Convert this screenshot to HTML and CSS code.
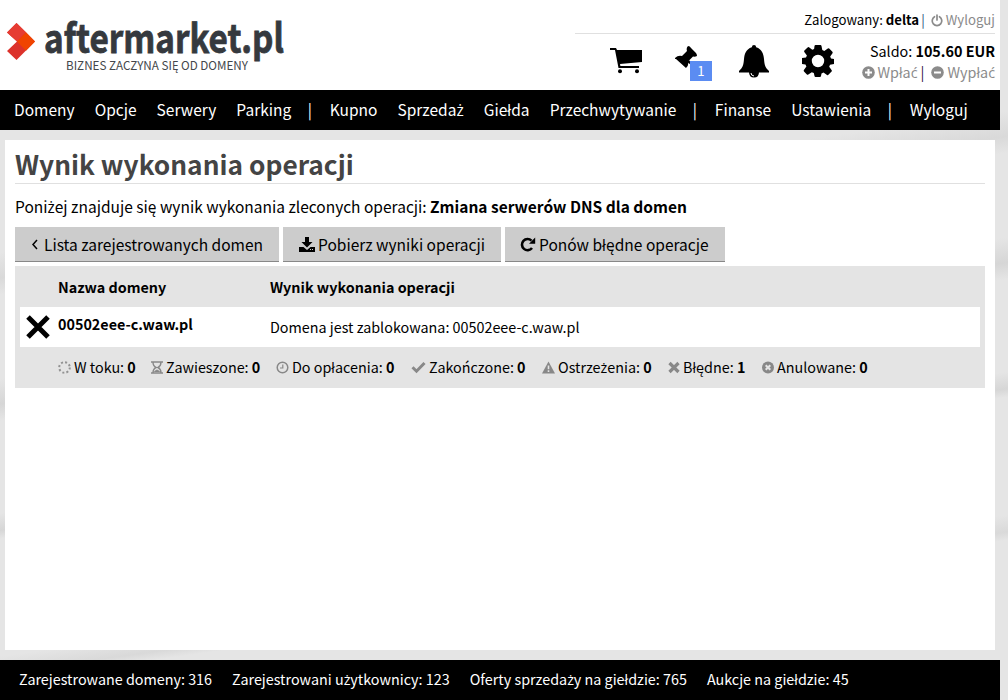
FILE: index.html
```html
<!DOCTYPE html>
<html lang="pl">
<head>
<meta charset="utf-8">
<title>Wynik wykonania operacji</title>
<link rel="stylesheet" href="styles.css">
</head>
<body>
<div class="page">
  <header class="header">
    <svg class="logo" width="300" height="90" viewBox="0 0 300 90">
      <path fill="#dc322b" d="M16.500 23L35 41.500 16.500 60 7 51l10-9.500L7 32.500z"/>
      <path fill="#e63c33" d="M16.500 23L26 32.300 17 41.500 7 32.500z"/>
      <path fill="#f04400" d="M26 32.300l9 9.200-9 9.300-9-9.300z"/>
      <text class="logo-name" x="44" y="53" textLength="240" lengthAdjust="spacingAndGlyphs">aftermarket.pl</text>
      <text class="logo-tag" x="66" y="70" textLength="182" lengthAdjust="spacingAndGlyphs">BIZNES ZACZYNA SIĘ OD DOMENY</text>
    </svg>
    <div class="account">
      <div class="user">
        <span>Zalogowany: <b>delta</b></span><span class="bar">|</span>
        <a class="muted"><svg width="12" height="13" viewBox="0 0 12 13" fill="none" stroke="#8b8b8b" stroke-width="1.700" stroke-linecap="round"><path d="M3.500 2.700a4.800 4.800 0 1 0 5 0M6 1v5"/></svg><span>Wyloguj</span></a>
      </div>
      <div class="tools">
        <div class="icons">
          <svg class="cart" width="32" height="28" viewBox="0 0 32 28"><path d="M0 1h6l1 2h25v12L10 17l.4 2H29v2H8.500L5 3H0z"/><circle cx="10" cy="24.200" r="2"/><circle cx="27" cy="24.200" r="2"/></svg>
          <span class="pin"><svg width="22" height="24" viewBox="0 0 22 24"><path d="M13 0q2 0 3 2l5 5q1 1.500 1 3-2 1-4 .5l-5 5q1 4-2 6.500L6 17.500 1 13Q-.5 13 0 12q3-3 7-2l5-5q-1-3 1-5z"/><path d="M14 14l5 7-7-5z"/></svg><span class="badge">1</span></span>
          <svg class="bell" width="32" height="33" viewBox="0 0 32 33"><path d="M16 0q2 0 2.200 2.200C24 4 25.500 9 26 14c.4 6 1.500 9 5 12v1.500H1V26c3.500-3 4.600-6 5-12 .5-5 2-10 7.800-11.800Q14 0 16 0zM11 27h10q0 5.500-5 5.500T11 27z"/><path d="M13 28q0 2.700 3 3" fill="none" stroke="#fff"/></svg>
          <svg class="gear" width="32" height="32" viewBox="0 0 32 32"><path fill-rule="evenodd" d="M12.500 1q.2-1 1-1h5q.8 0 1 1l.8 4 2 .9 3.500-2.400q.8-.5 1.400.1l3.200 3.200q.6.600.1 1.400L28.200 11.600l.8 2 3 .5V19l-4 .7-.8 2 2.500 3.500q.5.800-.1 1.400L26.400 29.800q-.6.600-1.400.1l-3.500-2.300-2 .8L19 31q-.2 1-1 1h-4.500q-.8 0-1-1l-.7-3-2-.8L6.300 29.600q-.8.500-1.400-.1L2 26.500q-.6-.6-.1-1.400l2.500-3.500-.9-2L0 19v-6l4-.6.900-2L2.300 7q-.5-.8.100-1.400L5.600 2.400q.6-.6 1.400-.1L10.300 4.800l1.800-.8zM16 9.800a6.200 6.200 0 1 0 0 12.400 6.200 6.200 0 1 0 0-12.400z"/></svg>
        </div>
        <div class="balance">
          <div>Saldo: <b>105.60 EUR</b></div>
          <div class="cash">
            <a class="muted"><svg width="13" height="13" viewBox="0 0 13 13"><circle cx="6.500" cy="6.500" r="6.300" fill="#8b8b8b"/><path d="M3 6.500h7M6.500 3v7" stroke="#fff" stroke-width="2"/></svg><span>Wpła<i class="pl">ć</i></span></a><span class="bar">|</span>
            <a class="muted"><svg width="13" height="13" viewBox="0 0 13 13"><circle cx="6.500" cy="6.500" r="6.300" fill="#8b8b8b"/><path d="M3 6.500h7" stroke="#fff" stroke-width="2"/></svg><span>Wypła<i class="pl">ć</i></span></a>
          </div>
        </div>
      </div>
    </div>
  </header>
  <nav class="nav">
    <a>Domeny</a><a>Opcje</a><a>Serwery</a><a>Parking</a><span class="sep">|</span><a>Kupno</a><a>Sprzeda<i class="pl">ż</i></a><a>Giełda</a><a>Przechwytywanie</a><span class="sep">|</span><a>Finanse</a><a>Ustawienia</a><span class="sep">|</span><a>Wyloguj</a>
  </nav>
  <main class="content">
    <h1>Wynik wykonania operacji</h1>
    <p class="lead">Poni<i class="pl">ż</i>ej znajduje się wynik wykonania zleconych operacji: <b>Zmiana serwerów DNS dla domen</b></p>
    <div class="buttons">
      <a class="button back"><svg width="8" height="12" viewBox="0 0 8 12" fill="none" stroke="#000" stroke-width="1.500"><path d="M6 2L2 6.500l4 4.500"/></svg>Lista zarejestrowanych domen</a>
      <a class="button get"><svg width="16" height="15" viewBox="0 0 16 15"><path d="M6 0h4v5h3.500L8 10.500 2.500 5H6z"/><path d="M0 10h4.500L8 13l3.500-3H16v5H0z"/><path d="M11 12.500h1m1 0h1" stroke="#ccc"/></svg>Pobierz wyniki operacji</a>
      <a class="button retry"><svg width="16" height="15" viewBox="0 0 16 15"><path d="M11.500 3.600A5.600 5.600 0 1 0 12 11" fill="none" stroke="#000" stroke-width="2.600"/><path d="M15.200.5v6.300H9z"/></svg>Ponów błędne operacje</a>
    </div>
    <section class="results">
      <div class="row head"><span></span><span>Nazwa domeny</span><span>Wynik wykonania operacji</span></div>
      <div class="row item">
        <svg width="26" height="26" viewBox="0 0 26 26"><path d="M3 3l20 20M23 3L3 23" stroke="#000" stroke-width="5"/></svg>
        <b>00502eee-c.waw.pl</b><span>Domena jest zablokowana: 00502eee-c.waw.pl</span>
      </div>
      <div class="summary">
        <span class="status"><svg width="13" height="13" viewBox="0 0 13 13"><circle cx="6.500" cy="6.500" r="5.300" fill="none" stroke="#929292" stroke-width="2" stroke-dasharray="2 2.160"/></svg><span>W toku: <b>0</b></span></span>
        <span class="status"><svg width="12" height="13" viewBox="0 0 12 13" fill="none" stroke="#888" stroke-width="1.400"><path d="M0 1h12M0 12h12M2 1q0 4 3 5.500Q2 8 2 12M10 1q0 4-3 5.500Q10 8 10 12"/><path d="M3.500 10.500L6 9l2.500 1.500z" fill="#888" stroke-width="1"/></svg><span>Zawieszone: <b>0</b></span></span>
        <span class="status"><svg width="13" height="13" viewBox="0 0 13 13" fill="none" stroke="#888" stroke-width="1.500"><circle cx="6.500" cy="6.500" r="5.300"/><path d="M6.800 3.500V7H4" stroke-width="1.200"/></svg><span>Do opłacenia: <b>0</b></span></span>
        <span class="status"><svg width="15" height="13" viewBox="0 0 15 13" fill="none" stroke="#888" stroke-width="3"><path d="M1.500 6.200l4 4L13.500 2"/></svg><span>Zakończone: <b>0</b></span></span>
        <span class="status"><svg width="13" height="13" viewBox="0 0 13 13"><path d="M6.500.5L13 12.500H0z" fill="#888"/><path d="M6.500 4.500v3.800m0 1v1.700" stroke="#e4e4e4" stroke-width="1.600"/></svg><span>Ostrze<i class="pl">ż</i>enia: <b>0</b></span></span>
        <span class="status"><svg width="12" height="13" viewBox="0 0 12 13" stroke="#888" stroke-width="3.200"><path d="M1.500 2l9 9M10.500 2l-9 9"/></svg><span>Błędne: <b>1</b></span></span>
        <span class="status"><svg width="12" height="13" viewBox="0 0 12 13"><circle cx="6" cy="6.500" r="6" fill="#888"/><path d="M3.700 4.200l4.600 4.600M8.300 4.200L3.700 8.800" stroke="#e4e4e4" stroke-width="2"/></svg><span>Anulowane: <b>0</b></span></span>
      </div>
    </section>
  </main>
  <footer class="footer">
    <span>Zarejestrowane domeny: 316</span><span>Zarejestrowani u<i class="pl">ż</i>ytkownicy: 123</span><span>Oferty sprzeda<i class="pl">ż</i>y na giełdzie: 765</span><span>Aukcje na giełdzie: 45</span>
  </footer>
</div>
</body>
</html>
```

FILE: styles.css
```css
* { box-sizing: border-box; }
body {
  margin: 0;
  height: 700px;
  overflow: hidden;
  color: #000;
  font: 14.35px/20px "Noto Sans CJK SC", "Open Sans", sans-serif;
  background:
    linear-gradient(172deg, transparent 30%, #d9d9d9 33%, transparent 35%, transparent 45%, #d6d6d6 48%, transparent 50%, transparent 61%, #d6d6d6 63%, transparent 64%, transparent 78%, #d9d9d9 80%, transparent 81%),
    #e5e5e5;
}
.pl { font-family: "Open Sans", sans-serif; font-style: normal; line-height: 0; }
svg { display: block; flex: none; }
.page { width: 1000px; height: 700px; display: flex; flex-direction: column; }

.header { height: 90px; background: #fff; display: flex; justify-content: space-between; padding-right: 5px; }
.logo-name { font-size: 39.5px; font-weight: 700; fill: #35393e; stroke: #35393e; stroke-width: .8; }
.logo-tag { font-size: 12px; fill: #44474b; }
.account { width: 420px; }
.user { height: 34px; padding-top: 10px; border-bottom: 1px solid #e0e0e0; display: flex; justify-content: flex-end; font-size: 13.2px; white-space: nowrap; }
.user > span { height: 20px; }
.user .bar { margin: 0 6px 0 2px; color: #247; }
.user .muted { height: 20px; }
.muted { display: flex; align-items: center; gap: 3px; color: #8b8b8b; }
.tools { display: flex; justify-content: space-between; padding-left: 35px; }
.icons { display: flex; padding-top: 11px; }
.cart { margin: 2px 33px 0 0; }
.pin { position: relative; margin: 1px 41px 0 0; }
.badge { position: absolute; left: 15px; top: 15px; width: 22px; height: 20px; background: #5b8cf2; color: #fff; text-align: center; font-size: 13.2px; line-height: 20px; }
.bell { margin-right: 32px; }
.balance { padding-top: 7px; text-align: right; white-space: nowrap; }
.cash { display: flex; justify-content: flex-end; margin-top: 1px; }
.cash .bar { margin: 0 7px 0 3px; color: #314; }

.nav { height: 40px; background: #000; color: #fff; display: flex; gap: 20.1px; padding-left: 14px; font-size: 15.5px; line-height: 39px; white-space: nowrap; }
.sep { width: 1px; margin-right: -2.600px; text-indent: -3.500px; }

.content { height: 510px; margin: 10px 5px; background: #fff; padding: 0 10px; }
h1 { margin: 0; height: 44px; border-bottom: 1px solid #e0e0e0; color: #444; font-size: 26.3px; line-height: 47px; white-space: nowrap; }
.lead { margin: 12px 0 11px; font-size: 15.5px; line-height: 20px; white-space: nowrap; }
.buttons { display: flex; gap: 4px; }
.button { height: 35px; background: #ccc; border-bottom: 1px solid #888; display: flex; align-items: center; font-size: 15.52px; padding-left: 16px; white-space: nowrap; }
.back { width: 264px; gap: 5px; }
.get { width: 218px; gap: 3px; }
.retry { width: 220px; gap: 3px; padding-left: 15px; }
.results { height: 122px; margin-top: 4px; background: #e4e4e4; padding: 0 5px; }
.row { display: grid; grid-template-columns: 38px 212px 1fr; align-items: center; }
.head { height: 41px; font-weight: 700; }
.item { height: 40px; background: #fff; }
.item svg { margin-left: 5px; }
.item b { padding-bottom: 6px; }
.summary { height: 40px; padding-left: 38px; display: grid; grid-template-columns: 93px 125px 135px 131px 126px 94px 1fr; align-items: center; white-space: nowrap; }
.status { display: flex; align-items: center; gap: 3px; }
.status svg { margin-top: 1px; }

.footer { height: 40px; background: #000; color: #fff; display: flex; gap: 20px; padding-left: 19px; line-height: 38px; white-space: nowrap; }
```
